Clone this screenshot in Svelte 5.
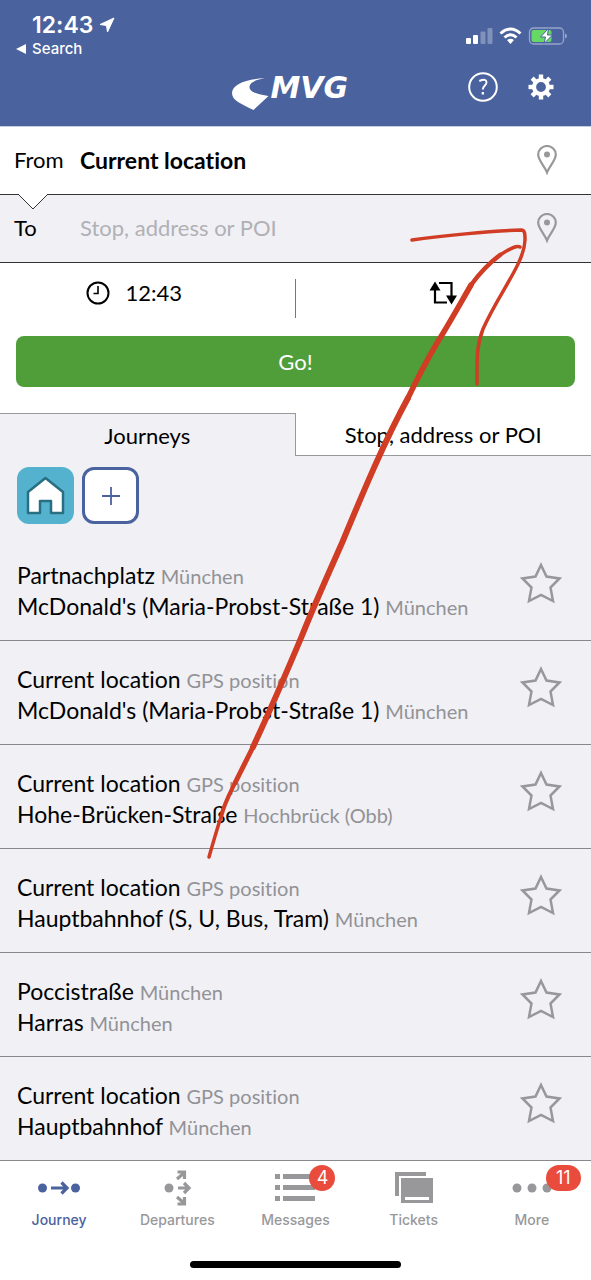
<script lang="ts">
    let from = 'Current location';
    let to = '';
    let activeList = 'journeys';
    let activeTab = 'Journey';

    const journeys = [
        { from: 'Partnachplatz', fromPlace: 'München', to: "McDonald's (Maria-Probst-Straße 1)", toPlace: 'München' },
        { from: 'Current location', fromPlace: 'GPS position', to: "McDonald's (Maria-Probst-Straße 1)", toPlace: 'München' },
        { from: 'Current location', fromPlace: 'GPS position', to: 'Hohe-Brücken-Straße', toPlace: 'Hochbrück (Obb)' },
        { from: 'Current location', fromPlace: 'GPS position', to: 'Hauptbahnhof (S, U, Bus, Tram)', toPlace: 'München' },
        { from: 'Poccistraße', fromPlace: 'München', to: 'Harras', toPlace: 'München' },
        { from: 'Current location', fromPlace: 'GPS position', to: 'Hauptbahnhof', toPlace: 'München' }
    ];

    const tabs = [
        { name: 'Journey', badge: '' },
        { name: 'Departures', badge: '' },
        { name: 'Messages', badge: '4' },
        { name: 'Tickets', badge: '' },
        { name: 'More', badge: '11' }
    ];
</script>

<div class="page">
    <header>
        <div class="status">
            <div class="status-left">
                <div class="clock">
                    <span>12:43</span>
                    <svg width="16" height="16" viewBox="0 0 16 16"><path d="M15 1L1 7.500L7.500 8.500L8.500 15Z" fill="#fff" stroke="#fff" stroke-linejoin="round" /></svg>
                </div>
                <a class="back" href="#search">
                    <svg width="11" height="12" viewBox="0 0 11 12"><path d="M0 6L10 1V11Z" fill="#fff" /></svg>
                    Search
                </a>
            </div>
            <svg width="101" height="18" viewBox="0 0 101 18">
                <g fill="#fff">
                    <rect x="0" y="11" width="5" height="6" rx="1" />
                    <rect x="7" y="8" width="5" height="9" rx="1" />
                    <rect x="14.500" y="4.500" width="5" height="12.500" rx="1" opacity=".3" />
                    <rect x="21.500" y="1" width="5" height="16" rx="1" opacity=".3" />
                </g>
                <g fill="none" stroke="#fff" stroke-width="3">
                    <path d="M34.500 6.500Q44.500 -2.500 54.500 6.500" />
                    <path d="M38.500 10.500Q44.500 5 50.500 10.500" />
                </g>
                <path d="M41 13Q44.500 10.500 48 13L44.500 17Z" fill="#fff" />
                <rect x="63.500" y="1" width="34" height="16" rx="4" fill="none" stroke="#98a5cb" stroke-width="1.300" />
                <path d="M99 6.500Q101 7 101 9T99 11.500Z" fill="#98a5cb" />
                <rect x="65.500" y="3" width="20" height="12" rx="2" fill="#65d964" />
                <path d="M82.500 1.500L74.500 10H79.500L78 16.500L86.500 8H81.500Z" fill="#fff" stroke="#4a629d" stroke-width="1" />
            </svg>
        </div>
        <div class="appbar">
            <div class="logo">
                <svg width="37" height="33" viewBox="0 0 37 33"><path d="M33 0C15 1 0 6 0 15C0 23 10 26 21.500 32L36.500 18C27 17 17 14 17.500 8.500C18 4 25 1.500 33 0Z" fill="#fff" /></svg>
                <span>MVG</span>
            </div>
            <div class="actions">
                <button aria-label="Help">
                    <svg width="30" height="30" viewBox="0 0 30 30">
                        <circle cx="15" cy="15" r="13.800" fill="none" stroke="#fff" stroke-width="2" />
                        <path d="M11.300 9Q18.500 6 18.500 10.500C18.500 13.500 14.800 13.500 14.800 17.500" fill="none" stroke="#fff" stroke-width="1.900" />
                        <rect x="13.700" y="20" width="2.300" height="2.500" fill="#fff" />
                    </svg>
                </button>
                <button aria-label="Settings">
                    <svg width="26" height="26" viewBox="-13 -13 26 26">
                        <circle r="7" fill="none" stroke="#fff" stroke-width="4.200" />
                        {#each [0, 45, 90, 135, 180, 225, 270, 315] as angle}
                            <rect x="-2.200" y="-12.500" width="4.400" height="5" fill="#fff" transform="rotate({angle})" />
                        {/each}
                    </svg>
                </button>
            </div>
        </div>
    </header>

    <form on:submit|preventDefault>
        <div class="field from">
            <label for="from">From</label>
            <input id="from" type="text" bind:value={from} />
            <button type="button" aria-label="Pick start on map">
                <svg width="20" height="30" viewBox="0 0 20 30">
                    <path d="M10 27.500C8 21.500 1.200 15.500 1.200 9.500A8.800 8.500 0 0 1 18.800 9.500C18.800 15.500 12 21.500 10 27.500Z" fill="none" stroke="#98989b" stroke-width="2.200" />
                    <circle cx="10" cy="9.500" r="3" fill="#98989b" />
                </svg>
            </button>
            <svg class="notch" width="32" height="16" viewBox="0 0 32 16"><path d="M1 0L16 15L31 0" fill="#fff" stroke="#333" /></svg>
        </div>
        <div class="field to">
            <label for="to">To</label>
            <input id="to" type="text" placeholder="Stop, address or POI" bind:value={to} />
            <button type="button" aria-label="Pick destination on map">
                <svg width="20" height="30" viewBox="0 0 20 30">
                    <path d="M10 27.500C8 21.500 1.200 15.500 1.200 9.500A8.800 8.500 0 0 1 18.800 9.500C18.800 15.500 12 21.500 10 27.500Z" fill="none" stroke="#98989b" stroke-width="2.200" />
                    <circle cx="10" cy="9.500" r="3" fill="#98989b" />
                </svg>
            </button>
        </div>
        <div class="options">
            <button type="button" class="time">
                <svg width="24" height="24" viewBox="0 0 24 24" fill="none" stroke="#000">
                    <circle cx="12" cy="12" r="10.500" stroke-width="2" />
                    <path d="M12 5V12.500H7.500" stroke-width="1.600" />
                </svg>
                12:43
            </button>
            <button type="button" class="swap" aria-label="Swap stops">
                <svg width="28" height="24" viewBox="0 0 28 24">
                    <path d="M6 8V21.500H18M10 2H22.500V15" fill="none" stroke="#000" stroke-width="2.200" />
                    <path d="M.5 9.500L6 .5L11.500 9.500ZM17 14.500L22.500 23.500L28 14.500Z" />
                </svg>
            </button>
        </div>
        <button class="go">Go!</button>
    </form>

    <div class="lists">
        <button class:active={activeList === 'journeys'} on:click={() => (activeList = 'journeys')}>Journeys</button>
        <button class:active={activeList === 'stops'} on:click={() => (activeList = 'stops')}>Stop, address or POI</button>
    </div>

    <main>
        <div class="shortcuts">
            <button class="home" aria-label="Home">
                <svg width="39" height="39" viewBox="0 0 39 39"><path d="M19.500 2L37 16V37H25V25H14V37H2V16Z" fill="#fff" stroke="#286f82" stroke-width="2.500" stroke-linejoin="round" /></svg>
            </button>
            <button class="add" aria-label="Add shortcut">
                <svg width="18" height="18" viewBox="0 0 18 18"><path d="M9 0V18M0 9H18" stroke="#4a629d" stroke-width="1.800" /></svg>
            </button>
        </div>
        <ul>
            {#each journeys as journey}
                <li>
                    <div class="route">
                        <div>{journey.from} <span>{journey.fromPlace}</span></div>
                        <div>{journey.to} <span>{journey.toPlace}</span></div>
                    </div>
                    <button aria-label="Favourite">
                        <svg width="42" height="42" viewBox="0 0 42 42"><path d="M21 3L26.500 14.500L39.500 16.500L30.500 25.500L33 39L21 33L9 39L11.500 25.500L2.500 16.500L15.500 14.500Z" fill="none" stroke="#98989b" stroke-width="2.500" /></svg>
                    </button>
                </li>
            {/each}
        </ul>
    </main>

    <nav>
        <div class="tabs">
            {#each tabs as tab}
                <button class:active={activeTab === tab.name} on:click={() => (activeTab = tab.name)}>
                    <span class="icon">
                        <svg width="44" height="38" viewBox="0 0 44 38" fill="currentColor">
                            {#if tab.name === 'Journey'}
                                <circle cx="5.500" cy="19" r="4.500" />
                                <circle cx="38.500" cy="19" r="4.500" />
                                <path d="M14 19H29M24.500 13.500L30 19L24.500 24.500" fill="none" stroke="currentColor" stroke-width="3.200" />
                            {:else if tab.name === 'Departures'}
                                <circle cx="14" cy="19" r="4.500" />
                                <g fill="none" stroke="currentColor" stroke-width="3.200">
                                    <path d="M23 19H33M29 14L34 19L29 24" />
                                    <path d="M22 10L29 4M22.500 3H29.500V10" />
                                    <path d="M22 28L29 34M22.500 35H29.500V28" />
                                </g>
                            {:else if tab.name === 'Messages'}
                                <path d="M2 5H7V10H2ZM10 5H42V10H10ZM2 16H7V21H2ZM10 16H42V21H10ZM2 27H7V32H2ZM10 27H42V32H10Z" />
                            {:else if tab.name === 'Tickets'}
                                <path d="M3 3H34V7H7V27H3Z" />
                                <path fill-rule="evenodd" d="M9 9H41V34H9ZM13 28V31H37V28Z" />
                            {:else}
                                <circle cx="7" cy="19" r="4.500" />
                                <circle cx="22" cy="19" r="4.500" />
                                <circle cx="37" cy="19" r="4.500" />
                            {/if}
                        </svg>
                        {#if tab.badge}
                            <span class="badge" class:wide={tab.badge.length > 1}>{tab.badge}</span>
                        {/if}
                    </span>
                    {tab.name}
                </button>
            {/each}
        </div>
        <div class="indicator"></div>
    </nav>

    <svg class="scribble" viewBox="0 0 591 1280" fill="none" stroke="#d03c24" stroke-linecap="round" stroke-linejoin="round">
        <path stroke-width="3.500" d="M412 240C440 236 490 231 521 230C525 230 525 234 525 240C524 264 500 291 483 329C476 347 477 362 477 384" />
        <path stroke-width="3.500" d="M520 247C517 245 511 248 500 255" />
        <path stroke-width="4.500" d="M500 255C488 264 479 274 471 285" />
        <path stroke-width="5.500" d="M471 285C460 304 449 324 437 343C427 360 417 379 408 398" />
        <path stroke-width="6" d="M408 398C385 440 364 490 342 543C330 570 315 603 301 638C285 676 268 715 253 747" />
        <path stroke-width="5" d="M253 747L235 783" />
        <path stroke-width="4" d="M235 783C229 795 224 804 221 817" />
        <path stroke-width="3.500" d="M221 817C217 829 213 843 209 857" />
    </svg>
</div>

<style>
    :global(body) {
        margin: 0;
        background: #fff;
    }

    .page {
        position: relative;
        font-family: Lato, 'Open Sans', sans-serif;
        font-size: 22px;
        font-variant-ligatures: none;
        color: #000;
    }

    button {
        display: flex;
        align-items: center;
        justify-content: center;
        padding: 0;
        border: none;
        background: none;
        color: inherit;
        font: inherit;
        font-variant-ligatures: none;
        cursor: pointer;
    }

    svg {
        display: block;
        flex-shrink: 0;
    }

    header {
        background: #4a629d;
        border-bottom: 1px solid #c5cddd;
        color: #fff;
    }

    .status {
        display: flex;
        justify-content: space-between;
        align-items: flex-start;
        padding: 10px 24px 0 16px;
        font-family: Inter, sans-serif;
    }

    .status > svg {
        margin-top: 17px;
    }

    .clock {
        display: flex;
        align-items: center;
        gap: 6px;
        padding-left: 16px;
        font-size: 23px;
        font-weight: 600;
        line-height: 30px;
    }

    .back {
        display: flex;
        align-items: center;
        gap: 5px;
        color: #fff;
        font-size: 15px;
        font-weight: 500;
        line-height: 18px;
        text-decoration: none;
    }

    .appbar {
        display: grid;
        grid-template-columns: 1fr auto 1fr;
        align-items: start;
        height: 54px;
        padding: 14px 37px 0;
    }

    .logo {
        grid-column: 2;
        display: flex;
        align-items: flex-start;
        gap: 2px;
        padding-top: 6px;
        width: 128px;
        font-family: 'DejaVu Sans', sans-serif;
        font-size: 30px;
        font-style: italic;
        font-weight: bold;
        line-height: 20px;
    }

    .actions {
        display: flex;
        align-items: center;
        justify-content: flex-end;
        gap: 30px;
    }

    .field {
        position: relative;
        display: flex;
        align-items: center;
        height: 65px;
        padding: 0 34px 2px 14px;
        border-bottom: 1px solid #333;
    }

    .field label {
        width: 66px;
    }

    .field input {
        flex: 1;
        min-width: 0;
        padding: 0;
        border: none;
        outline: none;
        background: none;
        font: inherit;
        font-variant-ligatures: none;
    }

    .from input {
        font-size: 23px;
        font-weight: bold;
    }

    .to {
        background: #f0f0f5;
    }

    .to input::placeholder {
        color: #b1b1b5;
        opacity: 1;
    }

    .notch {
        position: absolute;
        left: 17px;
        top: 67px;
        z-index: 1;
    }

    .options {
        display: grid;
        grid-template-columns: 1fr 1fr;
        padding: 16px 0 18px;
    }

    .options button {
        box-sizing: border-box;
        height: 39px;
        padding-bottom: 12px;
    }

    .time {
        gap: 15px;
        padding-right: 26px;
        border-right: 1px solid #777;
    }

    .go {
        width: calc(100% - 32px);
        height: 51px;
        margin: 0 16px 26px;
        border-radius: 8px;
        background: #4f9e3a;
        color: #fff;
    }

    .lists {
        display: grid;
        grid-template-columns: 1fr 1fr;
    }

    .lists button {
        height: 43px;
        border-bottom: 1px solid #98989b;
    }

    .lists .active {
        border-top: 1px solid #98989b;
        border-right: 1px solid #98989b;
        border-bottom: none;
        background: #f0f0f5;
    }

    main {
        background: #f0f0f5;
    }

    .shortcuts {
        display: flex;
        gap: 8px;
        padding: 11px 17px 13px;
    }

    .shortcuts button {
        box-sizing: border-box;
        width: 57px;
        height: 57px;
        border-radius: 12px;
    }

    .home {
        background: #54b2cf;
    }

    .add {
        border: 3px solid #4a629d;
        background: #fff;
    }

    ul {
        margin: 0;
        padding: 0;
        list-style: none;
    }

    li {
        display: flex;
        align-items: center;
        justify-content: space-between;
        height: 103px;
        padding: 0 29px 0 17px;
        border-bottom: 1px solid #88888c;
    }

    li button {
        margin-bottom: 12px;
    }

    .route {
        padding-top: 4px;
        font-size: 23px;
        line-height: 31px;
        white-space: nowrap;
    }

    .route span {
        color: #929296;
        font-size: 20px;
        line-height: 20px;
    }

    nav {
        padding-bottom: 12px;
        background: #fff;
        color: #98989b;
        font-family: Inter, sans-serif;
        font-size: 14px;
    }

    .tabs {
        display: grid;
        grid-template-columns: repeat(5, 1fr);
        padding-top: 8px;
    }

    .tabs button {
        flex-direction: column;
        gap: 4px;
        font-weight: 500;
        line-height: 18px;
    }

    .tabs .active {
        color: #4a629d;
    }

    .icon {
        position: relative;
    }

    .badge {
        position: absolute;
        left: 36px;
        top: -4px;
        box-sizing: border-box;
        min-width: 26px;
        padding: 0 7px;
        border-radius: 13px;
        background: #e94b3c;
        color: #fff;
        font-size: 18px;
        font-weight: 400;
        line-height: 26px;
    }

    .badge.wide {
        padding: 0 10px;
    }

    .indicator {
        width: 211px;
        height: 7px;
        margin: 32px auto 0;
        border-radius: 4px;
        background: #000;
    }

    .scribble {
        position: absolute;
        top: 0;
        left: 0;
        width: 100%;
        z-index: 2;
        pointer-events: none;
    }
</style>
